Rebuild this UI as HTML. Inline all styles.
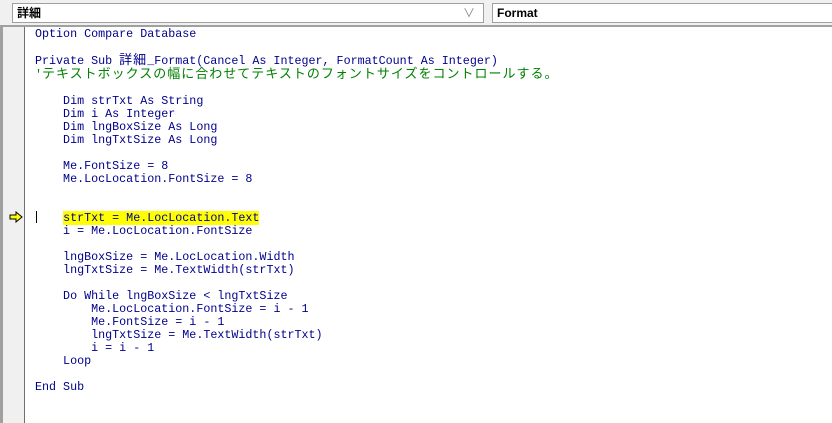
<!DOCTYPE html>
<html><head><meta charset="utf-8"><style>
body{margin:0;width:832px;height:423px;overflow:hidden;background:#fff;position:relative;font-family:"Liberation Mono","Noto Sans CJK JP",monospace}
.top{position:absolute;left:0;top:0;width:832px;height:25px;background:#f0f0f0;border-bottom:2px solid #a0a0a0}
.box{position:absolute;top:3px;height:18px;background:#fff;border:1px solid #a0a0a0;font:bold 12px "Liberation Sans","Noto Sans CJK JP",sans-serif;line-height:18px;padding-left:4px;box-sizing:border-box;height:20px}
.lb{position:absolute;left:0;top:27px;width:3px;height:396px;background:#a0a0a0}
.mg{position:absolute;left:3px;top:27px;width:21px;height:396px;background:#f0f0f0;border-right:1px solid #707070}
.code{position:absolute;left:35px;top:28px;font-size:11.7px;line-height:13px;white-space:pre;color:#00008b}
.j{font-size:13px;letter-spacing:1px}
.c{color:#008000}
.hl{background:#ffff00}
</style></head><body>
<div class="top"></div>
<div class="box" style="left:12px;width:472px">詳細<span style="position:absolute;right:8px;top:0;font-weight:normal;color:#888">∨</span></div>
<div class="box" style="left:492px;width:345px">Format</div>
<div class="lb"></div><div class="mg"></div>
<svg style="position:absolute;left:9px;top:211px" width="14" height="12"><path d="M1 4h6V1l6 5-6 5V8H1z" fill="#ffff00" stroke="#000" stroke-width="1"/></svg>
<div style="position:absolute;left:36px;top:211px;width:1px;height:12px;background:#000"></div>
<div class="code">Option Compare Database

Private Sub <span class="j">詳細</span>_Format(Cancel As Integer, FormatCount As Integer)
<span class="c">'<span class="j">テキストボックスの幅に合わせてテキストのフォントサイズをコントロールする。</span></span>

    Dim strTxt As String
    Dim i As Integer
    Dim lngBoxSize As Long
    Dim lngTxtSize As Long

    Me.FontSize = 8
    Me.LocLocation.FontSize = 8


    <span class="hl">strTxt = Me.LocLocation.Text</span>
    i = Me.LocLocation.FontSize

    lngBoxSize = Me.LocLocation.Width
    lngTxtSize = Me.TextWidth(strTxt)

    Do While lngBoxSize &lt; lngTxtSize
        Me.LocLocation.FontSize = i - 1
        Me.FontSize = i - 1
        lngTxtSize = Me.TextWidth(strTxt)
        i = i - 1
    Loop

End Sub</div>
</body></html>
